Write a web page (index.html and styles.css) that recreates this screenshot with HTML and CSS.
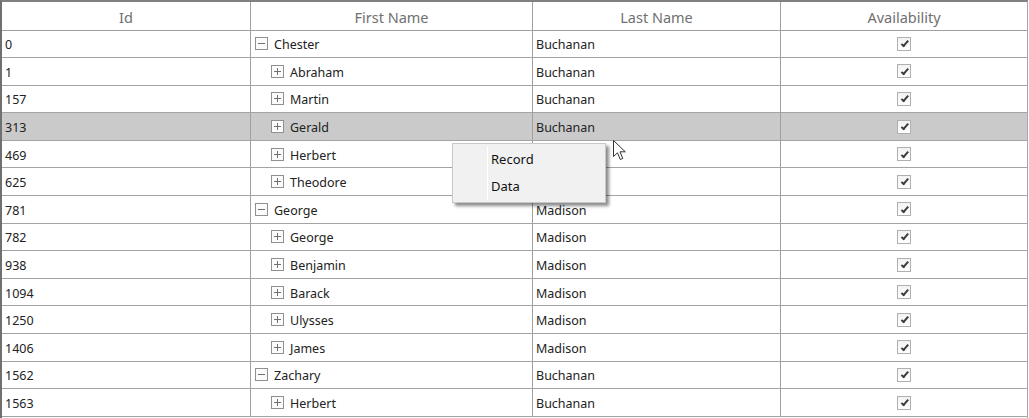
FILE: index.html
```html
<!DOCTYPE html>
<html lang="en">
<head>
  <meta charset="UTF-8">
  <title>Tree grid</title>
  <link rel="stylesheet" href="styles.css">
</head>
<body>

<div class="grid">
  <div class="head">
    <div class="hcell">Id</div>
    <div class="hcell">First Name</div>
    <div class="hcell">Last Name</div>
    <div class="hcell">Availability</div>
  </div>

  <div class="row"><div class="cell">0</div><div class="cell name"><span class="tog minus"></span>Chester</div><div class="cell">Buchanan</div><div class="cell check"><span class="box"></span></div></div>
  <div class="row"><div class="cell">1</div><div class="cell name child"><span class="tog plus"></span>Abraham</div><div class="cell">Buchanan</div><div class="cell check"><span class="box"></span></div></div>
  <div class="row"><div class="cell">157</div><div class="cell name child"><span class="tog plus"></span>Martin</div><div class="cell">Buchanan</div><div class="cell check"><span class="box"></span></div></div>
  <div class="row selected"><div class="cell">313</div><div class="cell name child"><span class="tog plus"></span>Gerald</div><div class="cell">Buchanan</div><div class="cell check"><span class="box"></span></div></div>
  <div class="row"><div class="cell">469</div><div class="cell name child"><span class="tog plus"></span>Herbert</div><div class="cell">Buchanan</div><div class="cell check"><span class="box"></span></div></div>
  <div class="row"><div class="cell">625</div><div class="cell name child"><span class="tog plus"></span>Theodore</div><div class="cell">Buchanan</div><div class="cell check"><span class="box"></span></div></div>
  <div class="row"><div class="cell">781</div><div class="cell name"><span class="tog minus"></span>George</div><div class="cell">Madison</div><div class="cell check"><span class="box"></span></div></div>
  <div class="row"><div class="cell">782</div><div class="cell name child"><span class="tog plus"></span>George</div><div class="cell">Madison</div><div class="cell check"><span class="box"></span></div></div>
  <div class="row"><div class="cell">938</div><div class="cell name child"><span class="tog plus"></span>Benjamin</div><div class="cell">Madison</div><div class="cell check"><span class="box"></span></div></div>
  <div class="row"><div class="cell">1094</div><div class="cell name child"><span class="tog plus"></span>Barack</div><div class="cell">Madison</div><div class="cell check"><span class="box"></span></div></div>
  <div class="row"><div class="cell">1250</div><div class="cell name child"><span class="tog plus"></span>Ulysses</div><div class="cell">Madison</div><div class="cell check"><span class="box"></span></div></div>
  <div class="row"><div class="cell">1406</div><div class="cell name child"><span class="tog plus"></span>James</div><div class="cell">Madison</div><div class="cell check"><span class="box"></span></div></div>
  <div class="row"><div class="cell">1562</div><div class="cell name"><span class="tog minus"></span>Zachary</div><div class="cell">Buchanan</div><div class="cell check"><span class="box"></span></div></div>
  <div class="row"><div class="cell">1563</div><div class="cell name child"><span class="tog plus"></span>Herbert</div><div class="cell">Buchanan</div><div class="cell check"><span class="box"></span></div></div>

  <!-- context menu opened on the selected row -->
  <ul class="menu">
    <li>Record</li>
    <li>Data</li>
  </ul>

  <svg class="pointer" width="14" height="22" viewBox="0 0 14 22">
    <path d="M0.5 0.5 L0.5 16.5 L4.5 12.8 L7.3 19.5 L9.8 18.4 L7 11.8 L12.3 11.8 Z" fill="#fff" stroke="#333" stroke-width="1" stroke-linejoin="round"/>
  </svg>
</div>

</body>
</html>
```

FILE: styles.css
```css
html {
  box-sizing: border-box;
}

*, *::before, *::after {
  box-sizing: inherit;
}

body {
  margin: 0;
  background: #fff;
  font-family: 'Noto Sans', 'Open Sans', sans-serif;
  font-size: 12.5px;
  color: #222;
}

.grid {
  position: relative;
  width: 1028px;
  height: 418px;
  overflow: hidden;
  border-left: 2px solid #707070;
  border-top: 2px solid #808080;
  border-right: 1px solid #a8a8a8;
}

.head,
.row {
  display: grid;
  grid-template-columns: 249px 282px 248px 1fr;
}

.head {
  height: 28.5px;
  border-bottom: 1px solid #a0a0a0;
}

.hcell {
  display: flex;
  align-items: center;
  justify-content: center;
  padding-top: 2px;
  border-right: 1px solid #a0a0a0;
  font-size: 14.5px;
  color: #707070;
}

.row {
  height: 27.6px;
  border-bottom: 1px solid #a4a4a4;
}

.row.selected {
  background: #cacaca;
}

.cell {
  display: flex;
  align-items: center;
  padding-left: 3px;
  padding-top: 2px;
  border-right: 1px solid #a0a0a0;
  white-space: nowrap;
}

.hcell:last-child,
.cell:last-child {
  border-right: none;
}

.name {
  padding-left: 4px;
}

.name.child {
  padding-left: 20px;
}

/* expand / collapse box */
.tog {
  position: relative;
  width: 13px;
  height: 13px;
  margin-top: -2px;
  margin-right: 6px;
  border: 1px solid #909090;
  background: #fbfbfb;
}

.tog::before {
  content: "";
  position: absolute;
  left: 2px;
  right: 2px;
  top: 5px;
  height: 1px;
  background: #707070;
}

.tog.plus::after {
  content: "";
  position: absolute;
  top: 2px;
  bottom: 2px;
  left: 5px;
  width: 1px;
  background: #707070;
}

.check {
  justify-content: center;
  padding-left: 0;
}

.box {
  position: relative;
  width: 14px;
  height: 14px;
  margin-top: -2px;
  border: 1px solid #b0b0b0;
  background: linear-gradient(#f2f2f2, #ffffff);
}

.box::after {
  content: "";
  position: absolute;
  left: 4.5px;
  top: 1.5px;
  width: 4px;
  height: 7.5px;
  border-right: 2px solid #3c3c3c;
  border-bottom: 2px solid #3c3c3c;
  transform: rotate(40deg);
}

.menu {
  position: absolute;
  left: 450px;
  top: 141px;
  width: 154px;
  margin: 0;
  padding: 2px 0;
  list-style: none;
  background: #f1f1f1;
  border: 1px solid #c8c8c8;
  box-shadow: 3px 3px 3px rgba(0, 0, 0, 0.45);
  font-size: 13px;
  color: #111;
}

.menu::before {
  content: "";
  position: absolute;
  left: 34px;
  top: 2px;
  bottom: 2px;
  width: 1px;
  background: #dcdcdc;
  border-right: 1px solid #fff;
}

.menu li {
  height: 27px;
  line-height: 27px;
  padding-left: 38px;
}

.pointer {
  position: absolute;
  left: 611px;
  top: 138px;
}
```
